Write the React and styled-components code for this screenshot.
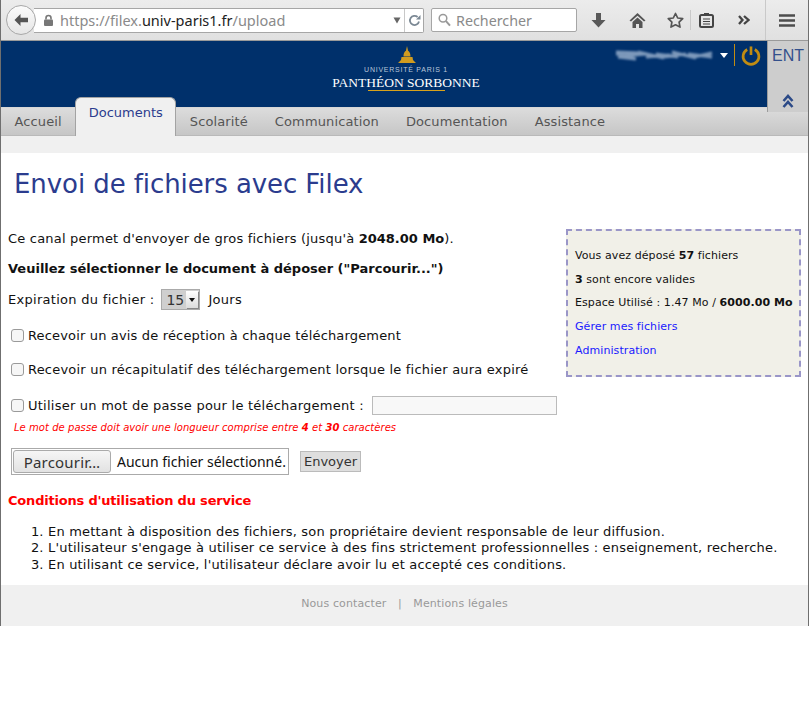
import React from 'react';
import styled, { createGlobalStyle } from 'styled-components';

const GlobalStyle = createGlobalStyle`
  html, body { margin: 0; padding: 0; background: #fff; }
  body { font-family: "DejaVu Sans", Verdana, sans-serif; font-size: 13px; color: #111; }
`;

const Page = styled.div`
  width: 809px;
  height: 626px;
  box-sizing: border-box;
  border-left: 1px solid #6f6f6f;
  border-right: 1px solid #6f6f6f;
  display: flex;
  flex-direction: column;
  background: #fff;
`;

/* browser chrome */
const Toolbar = styled.div`
  height: 41px;
  flex: none;
  box-sizing: border-box;
  border-bottom: 1px solid #9a9a9a;
  background: linear-gradient(#ececec, #e0e0e0);
  display: flex;
  align-items: center;
  padding-left: 5px;
  font-family: "Noto Sans", sans-serif;
`;

const BackButton = styled.div`
  width: 30px;
  height: 30px;
  flex: none;
  box-sizing: border-box;
  border: 1px solid #a8a8a8;
  border-radius: 50%;
  background: linear-gradient(#fbfbfb, #e6e6e6);
  display: flex;
  align-items: center;
  justify-content: center;
  position: relative;
  z-index: 1;
`;

const UrlBar = styled.div`
  width: 390px;
  height: 25px;
  margin-left: -2px;
  flex: none;
  box-sizing: border-box;
  border: 1px solid #a6a6a6;
  border-left: none;
  border-radius: 0 2px 2px 0;
  background: #fff;
  display: flex;
  align-items: center;
  padding-left: 9px;
`;

const Url = styled.span`
  margin-left: 6px;
  font-size: 14.5px;
  color: #8a8a8a;
  flex: 1;
  white-space: nowrap;
`;

const UrlHost = styled.span`
  color: #222;
`;

const ReloadBox = styled.div`
  width: 18px;
  height: 100%;
  margin-left: 3px;
  border-left: 1px solid #c8c8c8;
  display: flex;
  align-items: center;
  justify-content: center;
`;

const SearchBox = styled.div`
  width: 146px;
  height: 24px;
  margin-left: 7px;
  flex: none;
  box-sizing: border-box;
  border: 1px solid #a6a6a6;
  border-radius: 2px;
  background: #fff;
  display: flex;
  align-items: center;
  gap: 5px;
  padding-left: 6px;
  font-size: 14.3px;
  color: #8a8a8a;
`;

const ToolIcons = styled.div`
  flex: 1;
  height: 100%;
  display: flex;
  align-items: center;
`;

const ToolIcon = styled.div`
  width: ${p => p.$w || 38}px;
  height: 100%;
  margin-left: ${p => p.$ml || 0}px;
  flex: none;
  display: flex;
  align-items: center;
  justify-content: center;
  position: relative;
  box-sizing: border-box;
  ${p =>
    p.$sep &&
    `&::before {
      content: '';
      position: absolute;
      left: 0;
      top: ${p.$sepTop || 0}px;
      bottom: ${p.$sepTop || 0}px;
      width: 1px;
      background: #c9c9c9;
    }`}
`;

/* banner */
const Banner = styled.div`
  height: 67px;
  flex: none;
  display: flex;
  position: relative;
  z-index: 1;
`;

const BannerMain = styled.div`
  flex: 1;
  background: #00306b;
  border-bottom: 1px solid #d6d6d6;
  box-sizing: border-box;
  display: flex;
  flex-direction: column;
  align-items: center;
  position: relative;
  padding: 5px 0 0 44px;
`;

const Dome = styled.svg`
  display: block;
  margin-left: 2px;
`;

const University = styled.div`
  font-family: "Liberation Sans", sans-serif;
  font-size: 7px;
  line-height: 8px;
  letter-spacing: 0.75px;
  color: #b9c6da;
  margin-top: 3px;
`;

const Pantheon = styled.div`
  font-family: "Liberation Serif", serif;
  font-size: 13.5px;
  line-height: 15px;
  color: #fff;
  margin-top: 1px;
  white-space: nowrap;
`;

const GoldRule = styled.div`
  width: 77px;
  height: 1px;
  background: #d8a21b;
`;

const UserArea = styled.div`
  position: absolute;
  top: 3px;
  right: 6px;
  display: flex;
  align-items: center;
`;

const Smear = styled.svg`
  filter: blur(1px);
`;

const PowerBox = styled.div`
  border-left: 1px solid #c18c12;
  height: 22px;
  margin-left: 6px;
  padding-left: 6px;
  display: flex;
  align-items: center;
`;

const EntColumn = styled.div`
  width: 41px;
  height: 71px;
  flex: none;
  background: #cdcdcd;
  border-left: 1px solid #9c9c9c;
  box-sizing: border-box;
  display: flex;
  flex-direction: column;
  align-items: center;
  justify-content: space-between;
  padding: 6px 0 3px;
  color: #33508c;
  font-family: "Liberation Sans", sans-serif;
  font-size: 16px;
`;

/* tabs */
const TabBar = styled.div`
  height: 28px;
  flex: none;
  background: linear-gradient(#dcdcdc, #c6c6c6);
  border-bottom: 1px solid #b9b9b9;
  box-sizing: border-box;
  display: flex;
  align-items: flex-end;
`;

const Tab = styled.div`
  height: 27px;
  box-sizing: border-box;
  padding: 0 13.5px;
  display: flex;
  align-items: center;
  font-size: 13px;
  letter-spacing: 0.12px;
  color: #555;
  white-space: nowrap;
`;

const ActiveTab = styled(Tab)`
  height: 39px;
  width: 101px;
  flex: none;
  margin: 0 0 -1px;
  padding: 0 0 10px;
  justify-content: center;
  letter-spacing: 0;
  color: #2b3c8e;
  background: #f0f0f0;
  border: 1px solid #a3a3a3;
  border-bottom: none;
  border-radius: 6px 6px 0 0;
  position: relative;
  z-index: 2;
`;

const SubStrip = styled.div`
  height: 17px;
  flex: none;
  background: #f0f0f0;
`;

/* content */
const Content = styled.div`
  flex: 1;
  display: flex;
  flex-direction: column;
`;

const Title = styled.h1`
  margin: 15px 0 0 13px;
  font-size: 26px;
  line-height: 32px;
  font-weight: 400;
  letter-spacing: -0.08px;
  color: #2b3c8e;
`;

const Columns = styled.div`
  display: flex;
  justify-content: space-between;
  margin-top: 30px;
  padding: 0 7px;
`;

const FormColumn = styled.div`
  width: 556px;
  height: 0;
`;

const Line = styled.div`
  display: flex;
  align-items: center;
  height: ${p => p.$h || 17}px;
  margin-top: ${p => p.$mt || 0}px;
  white-space: nowrap;
  letter-spacing: ${p => p.$ls || 0.2}px;
  b {
    letter-spacing: 0;
  }
`;

const Check = styled.input.attrs({ type: 'checkbox' })`
  appearance: none;
  width: 13px;
  height: 13px;
  margin: 0 4px 0 3px;
  box-sizing: border-box;
  border: 1px solid #9a9a9a;
  border-radius: 3px;
  background: #f6f6f6;
`;

const SelectBox = styled.div`
  width: 39px;
  height: 21px;
  margin: 0 8px 0 7px;
  box-sizing: border-box;
  background: #cfcfcf;
  border: 1px solid #aaa;
  display: flex;
  align-items: stretch;
  font-size: 14px;
  letter-spacing: 0;
  color: #333;
`;

const SelectValue = styled.span`
  flex: 1;
  padding-left: 4px;
  line-height: 21px;
`;

const SelectArrow = styled.span`
  width: 12px;
  margin: 1px;
  background: linear-gradient(#fff, #dcdcdc);
  box-shadow: 1px 1px 0 #888;
  display: flex;
  align-items: center;
  justify-content: center;
  &::after {
    content: '';
    border-left: 3.5px solid transparent;
    border-right: 3.5px solid transparent;
    border-top: 4px solid #111;
  }
`;

const PasswordInput = styled.input.attrs({ type: 'password' })`
  width: 185px;
  height: 19px;
  margin-left: 8px;
  box-sizing: border-box;
  border: 1px solid #bbb;
  background: #f8f8f8;
`;

const Hint = styled.div`
  margin: 6px 0 0 6px;
  font-size: 10px;
  line-height: 14px;
  letter-spacing: 0.05px;
  font-style: italic;
  color: #f00;
  white-space: nowrap;
`;

const UploadRow = styled.div`
  display: flex;
  align-items: center;
  margin: 13px 0 0 3px;
`;

const FileBox = styled.div`
  width: 278px;
  height: 27px;
  box-sizing: border-box;
  border: 1px solid #aaa;
  display: flex;
  align-items: center;
  padding-left: 1px;
  font-family: "Noto Sans", sans-serif;
  font-size: 14px;
  color: #111;
  white-space: nowrap;
`;

const BrowseButton = styled.button`
  width: 98px;
  height: 23px;
  margin-right: 6px;
  padding: 0;
  box-sizing: border-box;
  border: 1px solid #aaa;
  border-radius: 3px;
  background: linear-gradient(#f6f6f6, #e2e2e2);
  font-family: inherit;
  font-size: 15px;
  letter-spacing: 0.2px;
  color: #333;
`;

const SendButton = styled.button`
  width: 61px;
  height: 21px;
  margin-left: 11px;
  padding: 0;
  box-sizing: border-box;
  border: 1px solid #bbb;
  background: #dedede;
  font-family: "DejaVu Sans", sans-serif;
  font-size: 13px;
  color: #333;
`;

const RedHeading = styled.div`
  margin-top: 17px;
  font-weight: 700;
  line-height: 17px;
  letter-spacing: -0.2px;
  color: #f00;
`;

const Terms = styled.ol`
  margin: 14.5px 0 0;
  padding-left: 40px;
  line-height: 16.5px;
  white-space: nowrap;
  letter-spacing: 0.19px;
`;

const InfoBox = styled.aside`
  width: 235px;
  height: 148px;
  box-sizing: border-box;
  margin: -1px 0 0;
  padding: 13px 0 0 7px;
  background: #f1f0e8;
  border: 2px dashed #9a96c8;
  font-size: 11px;
  line-height: 23.7px;
  letter-spacing: 0.08px;
  white-space: nowrap;
`;

const InfoLink = styled.a`
  display: block;
  color: #1a1aff;
  text-decoration: none;
`;

const Footer = styled.div`
  height: 41px;
  flex: none;
  box-sizing: border-box;
  padding-bottom: 4px;
  margin-top: auto;
  background: #f0f0f0;
  display: flex;
  align-items: center;
  justify-content: center;
  gap: 11.5px;
  font-size: 11px;
  letter-spacing: 0.12px;
  color: #999;
`;

const smear = ['M0 5 18 7', 'M8 7 30 5', 'M22 3 48 9', 'M40 5 62 8', 'M56 3 80 9', 'M72 5 96 8', 'M2 8 20 10', 'M48 8 70 5', 'M78 8 96 4', 'M0 3 24 4', 'M30 8 54 6'];

const App = () => (
  <>
    <GlobalStyle />
    <Page>
      <Toolbar>
        <BackButton>
          <svg width="16" height="14" viewBox="0 0 16 14">
            <path d="M7.5 1 1.5 7l6 6V9.2H15V4.8H7.5z" fill="#555" />
          </svg>
        </BackButton>
        <UrlBar>
          <svg width="11" height="13" viewBox="0 0 11 13">
            <path d="M3 5.5V4a2.5 2.5 0 0 1 5 0v1.5" fill="none" stroke="#777" strokeWidth="1.6" />
            <rect x="1" y="5.5" width="9" height="6.5" rx="1" fill="#777" />
          </svg>
          <Url>
            https://filex.<UrlHost>univ-paris1.fr</UrlHost>/upload
          </Url>
          <svg width="8" height="7" viewBox="0 0 8 7">
            <path d="M0.5 0.5h7L4 6.5z" fill="#666" />
          </svg>
          <ReloadBox>
            <svg width="13" height="13" viewBox="0 0 13 13">
              <path d="M11 7.5A4.6 4.6 0 1 1 9.6 3" fill="none" stroke="#7b8894" strokeWidth="1.8" />
              <path d="M8 5.5h4.5V1z" fill="#7b8894" />
            </svg>
          </ReloadBox>
        </UrlBar>
        <SearchBox>
          <svg width="13" height="14" viewBox="0 0 13 14">
            <circle cx="5" cy="5.2" r="3.8" fill="none" stroke="#999" strokeWidth="1.5" />
            <path d="M8 8.2l4 4.4" stroke="#999" strokeWidth="2" />
          </svg>
          Rechercher
        </SearchBox>
        <ToolIcons>
          <ToolIcon $w={43}>
            <svg width="15" height="15" viewBox="0 0 15 15">
              <path d="M5 0h5v7h4.5l-7 7.5L.5 7H5z" fill="#595959" />
            </svg>
          </ToolIcon>
          <ToolIcon $w={34}>
            <svg width="17" height="15" viewBox="0 0 17 15">
              <path d="M8.5 0 0.5 7.5 2 8.5 8.5 2.8 15 8.5l1.5-1z" fill="#555" />
              <path d="M3.5 9 8.5 4.5l5 4.5v6H10v-4H7v4H3.5z" fill="#555" />
            </svg>
          </ToolIcon>
          <ToolIcon $w={30} $ml={6}>
            <svg width="17" height="16" viewBox="0 0 17 16">
              <path d="M8.5 1.5l2.2 4.5 5 .7-3.6 3.5.9 4.9-4.5-2.3L4 15.1l.9-4.9L1.3 6.7l5-.7z" fill="none" stroke="#555" strokeWidth="1.7" strokeLinejoin="round" />
            </svg>
          </ToolIcon>
          <ToolIcon $sep $sepTop={10} $w={32}>
            <svg width="15" height="16" viewBox="0 0 15 16">
              <rect x="1" y="3" width="13" height="12" rx="1.5" fill="none" stroke="#444" strokeWidth="2" />
              <rect x="5" y="1" width="5" height="3" fill="#444" />
              <path d="M4 7h7M4 9.5h7M4 12h7" stroke="#444" strokeWidth="1.2" />
            </svg>
          </ToolIcon>
          <ToolIcon $w={43}>
            <svg width="12" height="10" viewBox="0 0 12 10">
              <path d="M1 1l3.5 4L1 9M6 1l4.5 4L6 9" fill="none" stroke="#444" strokeWidth="2.3" />
            </svg>
          </ToolIcon>
          <ToolIcon $sep $w={43}>
            <svg width="16" height="13" viewBox="0 0 16 13">
              <path d="M0 1.5h16M0 6.5h16M0 11.5h16" stroke="#4d4d4d" strokeWidth="2.4" />
            </svg>
          </ToolIcon>
        </ToolIcons>
      </Toolbar>

      <Banner>
        <BannerMain>
          <Dome width="18" height="17" viewBox="0 0 18 17">
            <path d="M9 0l1 4.500H8z M5.500 10.500C5.500 7 7 4.500 9 4.500s3.500 2.500 3.500 6z M3.500 11h11l.5 3H3z M0 17l3-3h12l3 3z" fill="#d09c20" />
          </Dome>
          <University>UNIVERSITÉ PARIS 1</University>
          <Pantheon>PANTHÉON SORBONNE</Pantheon>
          <GoldRule />
          <UserArea>
            <Smear width="97" height="13" viewBox="0 0 97 13">
              <g stroke="#a7bcd6" strokeWidth="3" opacity="0.75">
                {smear.map(d => (
                  <path key={d} d={d} />
                ))}
              </g>
            </Smear>
            <svg width="8" height="5" viewBox="0 0 8 5" style={{ marginLeft: 7 }}>
              <path d="M0 0h8L4 5z" fill="#fff" />
            </svg>
            <PowerBox>
              <svg width="20" height="21" viewBox="0 0 21 21">
                <path d="M6.500 4.200a8.300 8.300 0 1 0 8 0" fill="none" stroke="#c18c12" strokeWidth="2.800" />
                <path d="M10.500 1v9" stroke="#c18c12" strokeWidth="2.800" />
              </svg>
            </PowerBox>
          </UserArea>
        </BannerMain>
        <EntColumn>
          <span>ENT</span>
          <svg width="12" height="15" viewBox="0 0 12 15">
            <path d="M1.500 7l4.500-5 4.500 5M1.500 13l4.500-5 4.500 5" fill="none" stroke="#2c4a87" strokeWidth="2.600" />
          </svg>
        </EntColumn>
      </Banner>

      <TabBar>
        <Tab>Accueil</Tab>
        <ActiveTab>Documents</ActiveTab>
        <Tab>Scolarité</Tab>
        <Tab>Communication</Tab>
        <Tab>Documentation</Tab>
        <Tab>Assistance</Tab>
      </TabBar>
      <SubStrip />

      <Content>
        <Title>Envoi de fichiers avec Filex</Title>
        <Columns>
          <FormColumn>
            <Line>
              Ce canal permet d'envoyer de gros fichiers (jusqu'à&nbsp;<b>2048.00 Mo</b>).
            </Line>
            <Line $mt={13}>
              <b>Veuillez sélectionner le document à déposer ("Parcourir...")</b>
            </Line>
            <Line $h={21} $mt={12} $ls={0.29}>
              Expiration du fichier :<SelectBox><SelectValue>15</SelectValue><SelectArrow /></SelectBox>Jours
            </Line>
            <Line $mt={17} $ls={0.16}>
              <Check />Recevoir un avis de réception à chaque téléchargement
            </Line>
            <Line $mt={17} $ls={0.21}>
              <Check />Recevoir un récapitulatif des téléchargement lorsque le fichier aura expiré
            </Line>
            <Line $h={19} $mt={18} $ls={0.24}>
              <Check />Utiliser un mot de passe pour le téléchargement :<PasswordInput />
            </Line>
            <Hint>
              Le mot de passe doit avoir une longueur comprise entre <b>4</b> et <b>30</b> caractères
            </Hint>
            <UploadRow>
              <FileBox>
                <BrowseButton>Parcourir…</BrowseButton>
                Aucun fichier sélectionné.
              </FileBox>
              <SendButton>Envoyer</SendButton>
            </UploadRow>
            <RedHeading>Conditions d'utilisation du service</RedHeading>
            <Terms>
              <li>En mettant à disposition des fichiers, son propriétaire devient responsable de leur diffusion.</li>
              <li>L'utilisateur s'engage à utiliser ce service à des fins strictement professionnelles : enseignement, recherche.</li>
              <li>En utilisant ce service, l'utilisateur déclare avoir lu et accepté ces conditions.</li>
            </Terms>
          </FormColumn>
          <InfoBox>
            <div>Vous avez déposé <b>57</b> fichiers</div>
            <div><b>3</b> sont encore valides</div>
            <div>Espace Utilisé : 1.47 Mo / <b>6000.00 Mo</b></div>
            <InfoLink href="#">Gérer mes fichiers</InfoLink>
            <InfoLink href="#">Administration</InfoLink>
          </InfoBox>
        </Columns>
        <Footer>
          <span>Nous contacter</span>
          <span>|</span>
          <span>Mentions légales</span>
        </Footer>
      </Content>
    </Page>
  </>
);

export default App;
